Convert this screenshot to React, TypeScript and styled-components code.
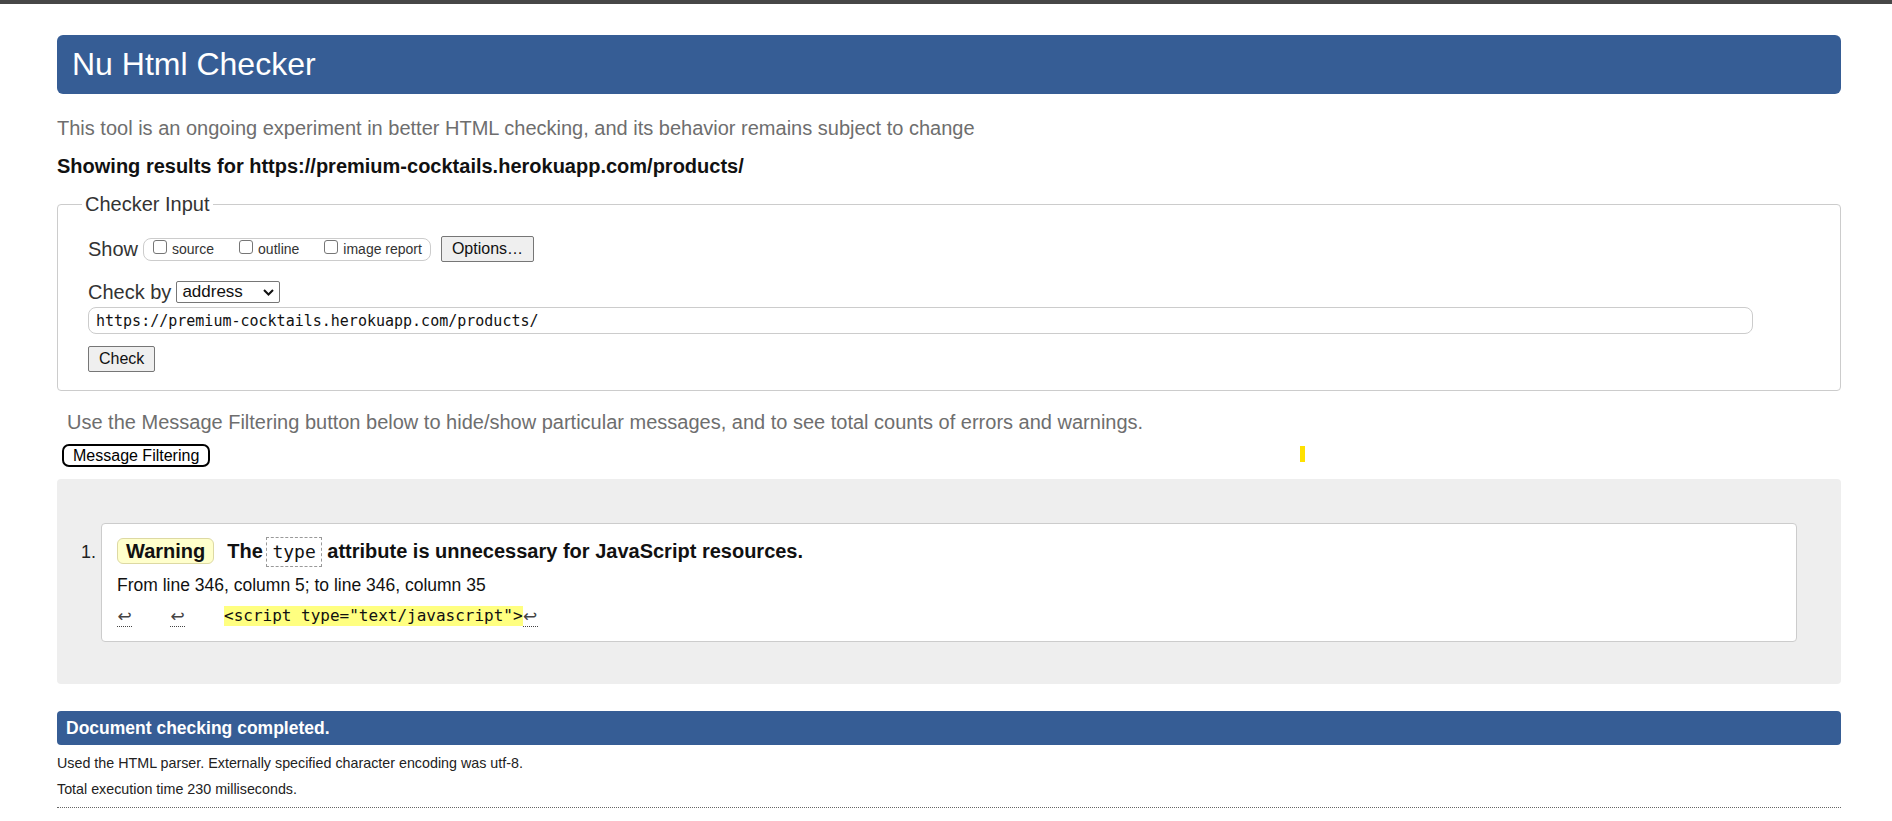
import React from 'react'
import styled, { createGlobalStyle } from 'styled-components'

const GlobalStyle = createGlobalStyle`
  html, body {
    margin: 0;
    padding: 0;
    background: #fff;
  }
  body {
    font-family: "Liberation Sans", Arial, sans-serif;
    color: #222;
  }
`

const TopBar = styled.div`
  height: 4px;
  background: #474747;
`

const Page = styled.main`
  padding: 0 51px 0 57px;
`

const Header = styled.h1`
  margin: 31px 0 0;
  height: 59px;
  line-height: 58px;
  padding: 0 15px;
  background: #365d95;
  color: #fff;
  font-size: 32px;
  font-weight: normal;
  border-radius: 6px;
`

const Intro = styled.p`
  margin: 22px 0 0;
  font-size: 20px;
  line-height: 24px;
  color: #6e6e6e;
`

const ResultsFor = styled.p`
  margin: 14px 0 0;
  font-size: 20px;
  line-height: 24px;
  font-weight: bold;
  color: #111;
`

const InputFieldset = styled.fieldset`
  margin: 14px 0 0;
  padding: 19px 87px 18px 30px;
  border: 1px solid #ccc;
  border-radius: 4px;
  min-width: 0;
`

const Legend = styled.legend`
  margin-left: -6px;
  padding: 0 3px;
  font-size: 20px;
  line-height: 24px;
  color: #333;
`

const FieldRow = styled.div<{ $top?: number }>`
  display: flex;
  align-items: center;
  height: ${p => (p.$top ? 30 : 28)}px;
  margin-top: ${p => p.$top ?? 0}px;
`

const FieldLabel = styled.span`
  font-size: 20px;
  color: #333;
  margin-right: 5px;
`

const CheckGroup = styled.div`
  display: flex;
  align-items: center;
  gap: 25px;
  box-sizing: border-box;
  height: 23px;
  padding: 0 8px 0 9px;
  border: 1px solid #ccc;
  border-radius: 8px;
`

const CheckItem = styled.label`
  display: flex;
  align-items: center;
  gap: 5px;
  font-size: 14px;
  color: #333;
`

const Checkbox = styled.input`
  appearance: none;
  width: 14px;
  height: 14px;
  margin: 0 0 4px;
  border: 1px solid #767676;
  border-radius: 3px;
  background: #fff;
`

const NativeButton = styled.button<{ $left?: number }>`
  box-sizing: border-box;
  height: 26px;
  margin-left: ${p => p.$left ?? 0}px;
  padding: 0 10px;
  font-family: "Liberation Sans", Arial, sans-serif;
  font-size: 16px;
  color: #111;
  background: #efefef;
  border: 1px solid #767676;
  border-radius: 2px;
`

const SelectBox = styled.div`
  display: flex;
  align-items: center;
  justify-content: space-between;
  box-sizing: border-box;
  width: 104px;
  height: 22px;
  padding: 0 5px 0 5px;
  border: 1px solid #767676;
  border-radius: 2px;
  font-size: 17px;
  color: #111;
`

const UrlInput = styled.input`
  display: block;
  box-sizing: border-box;
  width: 100%;
  height: 27px;
  margin: 0;
  padding: 0 7px;
  border: 1px solid #ccc;
  border-radius: 8px;
  font-family: "DejaVu Sans Mono", "Liberation Mono", monospace;
  font-size: 15px;
  color: #111;
`

const CheckButtonRow = styled.div`
  margin-top: 12px;
`

const FilterNote = styled.p`
  margin: 19px 0 0;
  padding-left: 10px;
  font-size: 20px;
  line-height: 24px;
  color: #6e6e6e;
`

const FilterRow = styled.div`
  display: flex;
  align-items: flex-start;
  margin-top: 10px;
  padding-left: 5px;
`

const FilterButton = styled.button`
  box-sizing: border-box;
  height: 23px;
  padding: 0 9px;
  border: 2px solid #000;
  border-radius: 7px;
  background: #fff;
  font-family: "Liberation Sans", Arial, sans-serif;
  font-size: 16px;
  line-height: 19px;
  color: #000;
`

const FocusMark = styled.span`
  width: 5px;
  height: 16px;
  margin: 2px 0 0 1090px;
  background: #ffe100;
`

const ResultsPanel = styled.section`
  margin-top: 12px;
  padding: 44px 44px 42px;
  background: #eee;
  border-radius: 4px;
`

const MessageList = styled.ol`
  margin: 0;
  padding: 0;
  list-style: decimal outside;
`

const MessageItem = styled.li`
  padding: 12px 15px 14px;
  background: #fff;
  border: 1px solid #ccc;
  border-radius: 4px;
  font-size: 18px;
  color: #111;

  &::marker {
    color: #222;
  }
`

const MessageHeading = styled.p`
  margin: 0;
  height: 30px;
  font-size: 20px;
  font-weight: bold;
  line-height: 30px;
`

const Badge = styled.span`
  display: inline-block;
  margin-right: 13px;
  padding: 0 8px;
  line-height: 24px;
  background: #ffffcc;
  border: 1px solid #ddd9a3;
  border-radius: 6px;
`

const InlineCode = styled.code`
  display: inline-block;
  margin-left: -2px;
  padding: 0 5px;
  line-height: 28px;
  font-family: "DejaVu Sans Mono", "Liberation Mono", monospace;
  font-size: 18px;
  font-weight: normal;
  border: 1px dashed #999;
`

const Location = styled.p`
  margin: 8px 0 0;
  font-size: 17.5px;
  line-height: 22px;
`

const Extract = styled.p`
  display: flex;
  align-items: flex-start;
  margin: 10px 0 0;
  font-family: "DejaVu Sans Mono", "Liberation Mono", monospace;
  font-size: 16px;
  line-height: 20px;
  white-space: pre;
`

const LineBreak = styled.b<{ $gap?: number }>`
  display: inline-block;
  width: 15px;
  height: 20px;
  margin-right: ${p => p.$gap ?? 0}px;
  font-family: "DejaVu Sans", sans-serif;
  font-size: 17px;
  line-height: 20px;
  font-weight: normal;
  text-align: center;
  color: #444;
  border-bottom: 1px dotted #444;
`

const Highlight = styled.mark`
  background: #ffff80;
  color: #111;
`

const DocBar = styled.h2`
  margin: 27px 0 0;
  height: 34px;
  padding: 0 9px;
  line-height: 34px;
  background: #365d95;
  color: #fff;
  font-size: 17.5px;
  font-weight: bold;
  border-radius: 4px;
`

const Footnote = styled.p<{ $top: number }>`
  margin: ${p => p.$top}px 0 0;
  font-size: 14.3px;
  line-height: 18px;
  color: #222;
`

const DottedRule = styled.hr`
  margin: 9px 0 0;
  border: 0;
  border-top: 1px dotted #666;
`

const Chevron = () => (
  <svg width="11" height="7" viewBox="0 0 11 7">
    <path d="M1 1 L5.5 5.5 L10 1" fill="none" stroke="#111" strokeWidth="2" />
  </svg>
)

const showOptions = ['source', 'outline', 'image report']

const App = () => {
  return (
    <>
      <GlobalStyle />
      <TopBar />
      <Page>
        <Header>Nu Html Checker</Header>
        <Intro>
          This tool is an ongoing experiment in better HTML checking, and its behavior remains subject to change
        </Intro>
        <ResultsFor>Showing results for https://premium-cocktails.herokuapp.com/products/</ResultsFor>

        <InputFieldset>
          <Legend>Checker Input</Legend>
          <FieldRow>
            <FieldLabel>Show</FieldLabel>
            <CheckGroup>
              {showOptions.map(opt => (
                <CheckItem key={opt}>
                  <Checkbox type="checkbox" />
                  {opt}
                </CheckItem>
              ))}
            </CheckGroup>
            <NativeButton $left={10}>Options…</NativeButton>
          </FieldRow>
          <FieldRow $top={14}>
            <FieldLabel>Check by</FieldLabel>
            <SelectBox>
              address
              <Chevron />
            </SelectBox>
          </FieldRow>
          <UrlInput readOnly defaultValue="https://premium-cocktails.herokuapp.com/products/" />
          <CheckButtonRow>
            <NativeButton>Check</NativeButton>
          </CheckButtonRow>
        </InputFieldset>

        <FilterNote>
          Use the Message Filtering button below to hide/show particular messages, and to see total counts of errors and warnings.
        </FilterNote>
        <FilterRow>
          <FilterButton>Message Filtering</FilterButton>
          <FocusMark />
        </FilterRow>

        <ResultsPanel>
          <MessageList>
            <MessageItem>
              <MessageHeading>
                <Badge>Warning</Badge>
                The <InlineCode>type</InlineCode> attribute is unnecessary for JavaScript resources.
              </MessageHeading>
              <Location>From line 346, column 5; to line 346, column 35</Location>
              <Extract>
                <LineBreak $gap={38}>↩</LineBreak>
                <LineBreak $gap={39}>↩</LineBreak>
                <Highlight>{'<script type="text/javascript">'}</Highlight>
                <LineBreak>↩</LineBreak>
              </Extract>
            </MessageItem>
          </MessageList>
        </ResultsPanel>

        <DocBar>Document checking completed.</DocBar>
        <Footnote $top={9}>Used the HTML parser. Externally specified character encoding was utf-8.</Footnote>
        <Footnote $top={8}>Total execution time 230 milliseconds.</Footnote>
        <DottedRule />
      </Page>
    </>
  )
}

export default App
